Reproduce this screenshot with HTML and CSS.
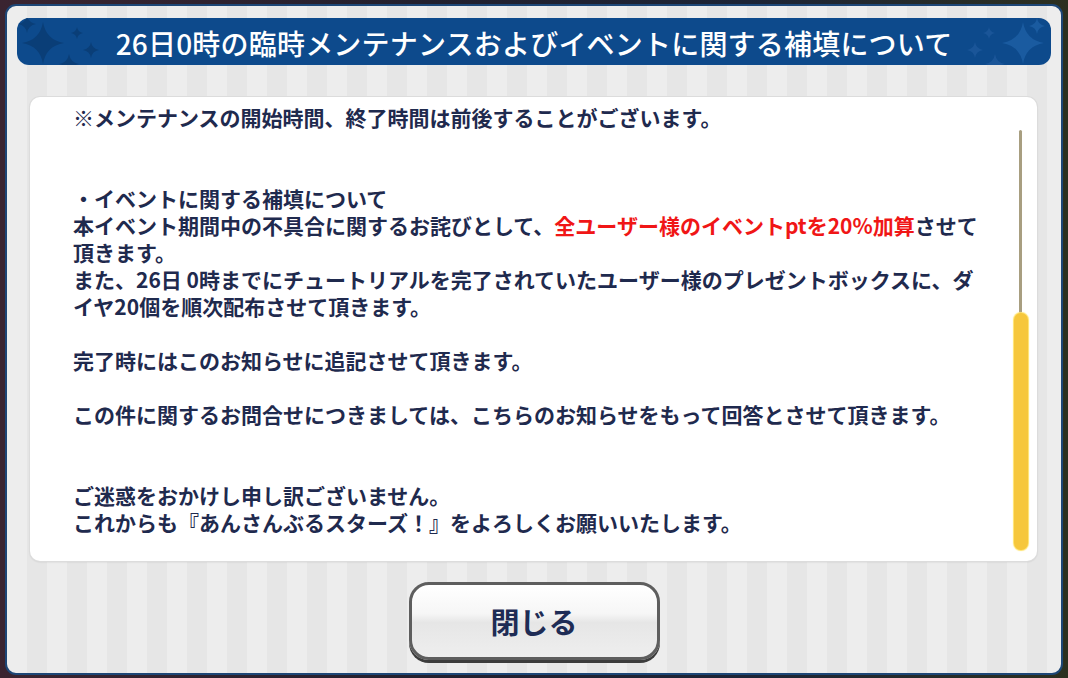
FILE: index.html
```html
<!DOCTYPE html>
<html lang="ja">
<head>
    <meta charset="UTF-8">
    <meta name="viewport" content="width=device-width, initial-scale=1.0">
    <title>お知らせ</title>
    <link rel="stylesheet" href="styles.css">
</head>
<body>

    <div class="panel">
        <div class="title-bar">
            <!-- sparkle decoration -->
            <svg class="sparkles" width="1034" height="47" viewBox="0 0 1034 47">
                <defs>
                    <path id="star" d="M0,-1 Q0.14,-0.14 1,0 Q0.14,0.14 0,1 Q-0.14,0.14 -1,0 Q-0.14,-0.14 0,-1Z"/>
                </defs>
                <use href="#star" transform="translate(26 25) scale(21)" fill="#0a3e77"/>
                <use href="#star" transform="translate(10 6) scale(9)" fill="#0a3e77"/>
                <use href="#star" transform="translate(60 15) scale(6)" fill="#0a3e77"/>
                <use href="#star" transform="translate(74 32) scale(8)" fill="#0a3e77"/>
                <use href="#star" transform="translate(52 46) scale(10)" fill="#0a3e77"/>
                <use href="#star" transform="translate(1006 25) scale(21)" fill="#1a5ba0"/>
                <use href="#star" transform="translate(1020 8) scale(8)" fill="#1a5ba0"/>
                <use href="#star" transform="translate(972 15) scale(6)" fill="#1a5598"/>
                <use href="#star" transform="translate(958 32) scale(8)" fill="#1a5598"/>
                <use href="#star" transform="translate(978 46) scale(10)" fill="#1a5598"/>
            </svg>
            <h1>26日0時の臨時メンテナンスおよびイベントに関する補填について</h1>
        </div>

        <div class="content">
            <div class="notice-text">
                <p>※メンテナンスの開始時間、終了時間は前後することがございます。</p>
                <p class="blank"></p>
                <p class="blank"></p>
                <p>・イベントに関する補填について</p>
                <p>本イベント期間中の不具合に関するお詫びとして、<span class="red">全ユーザー様のイベントptを20%加算</span>させて</p>
                <p>頂きます。</p>
                <p>また、26日 0時までにチュートリアルを完了されていたユーザー様のプレゼントボックスに、ダ</p>
                <p>イヤ20個を順次配布させて頂きます。</p>
                <p class="blank"></p>
                <p>完了時にはこのお知らせに追記させて頂きます。</p>
                <p class="blank"></p>
                <p>この件に関するお問合せにつきましては、こちらのお知らせをもって回答とさせて頂きます。</p>
                <p class="blank"></p>
                <p class="blank"></p>
                <p>ご迷惑をおかけし申し訳ございません。</p>
                <p>これからも『あんさんぶるスターズ！』をよろしくお願いいたします。</p>
            </div>
            <div class="scrollbar">
                <div class="track"></div>
                <div class="thumb"></div>
            </div>
        </div>

        <div class="footer">
            <button class="close-btn">閉じる</button>
        </div>
    </div>

</body>
</html>
```

FILE: styles.css
```css
html, body {
    margin: 0;
    height: 100%;
}
body {
    background: linear-gradient(90deg, #3a2430 0%, #22202e 40%, #1c2436 70%, #2c3020 100%);
    padding: 4px 5px 3px 5px;
    box-sizing: border-box;
    font-family: "Noto Sans CJK JP", "Noto Sans", sans-serif;
    overflow: hidden;
}
.panel {
    width: 1058px;
    height: 671px;
    box-sizing: border-box;
    border: 2px solid #1d4676;
    border-radius: 11px;
    background: repeating-linear-gradient(90deg, #ededed 0px, #ededed 20px, #e6e6e6 20px, #e6e6e6 40px);
    display: flex;
    flex-direction: column;
    padding: 12px 10px 0 10px;
}
.title-bar {
    position: relative;
    height: 47px;
    border-radius: 12px;
    background: #0d4a8c;
    display: flex;
    align-items: center;
    justify-content: center;
    overflow: hidden;
}
.sparkles {
    position: absolute;
    left: 0;
    top: 0;
}
.title-bar h1 {
    position: relative;
    margin: 0;
    color: #fff;
    font-size: 28px;
    font-weight: 500;
    letter-spacing: 0.2px;
    line-height: 1;
    padding-top: 2px;
}
.content {
    margin: 32px 14px 0 13px;
    height: 464px;
    background: #fff;
    border-radius: 10px;
    box-shadow: 0 0 0 1px #dcdcdc, 0 1px 2px rgba(0, 0, 0, 0.15);
    display: flex;
    overflow: hidden;
}
.notice-text {
    flex: 1;
    padding: 7px 0 0 43px;
    color: #1f2a4e;
    font-size: 21px;
    font-weight: 700;
    line-height: 27px;
    white-space: nowrap;
}
.notice-text p {
    margin: 0;
    height: 27px;
}
.red {
    color: #f01616;
}
.scrollbar {
    width: 15px;
    margin-right: 9px;
    padding: 33px 0 11px 0;
    display: flex;
    flex-direction: column;
    align-items: center;
}
.track {
    flex: 1;
    width: 3px;
    background: #a89e80;
    border-radius: 2px;
}
.thumb {
    width: 14px;
    height: 237px;
    border-radius: 7px;
    background: #f6c73c;
    box-shadow: 0 0 1px 1px #ffe36a;
}
.footer {
    display: flex;
    justify-content: center;
    padding-top: 21px;
}
.close-btn {
    width: 251px;
    height: 78px;
    border: 3px solid #5e5e5e;
    border-radius: 20px;
    background: linear-gradient(180deg, #ffffff 0%, #f6f6f6 40%, #e6e6e6 52%, #eeeeee 100%);
    box-shadow: 0 3px 0 #3c3c3c, inset 0 2px 0 #ffffff;
    color: #1e2c55;
    font-family: "Noto Sans CJK JP", sans-serif;
    font-size: 29px;
    font-weight: 700;
    cursor: pointer;
    padding: 0;
}
```
